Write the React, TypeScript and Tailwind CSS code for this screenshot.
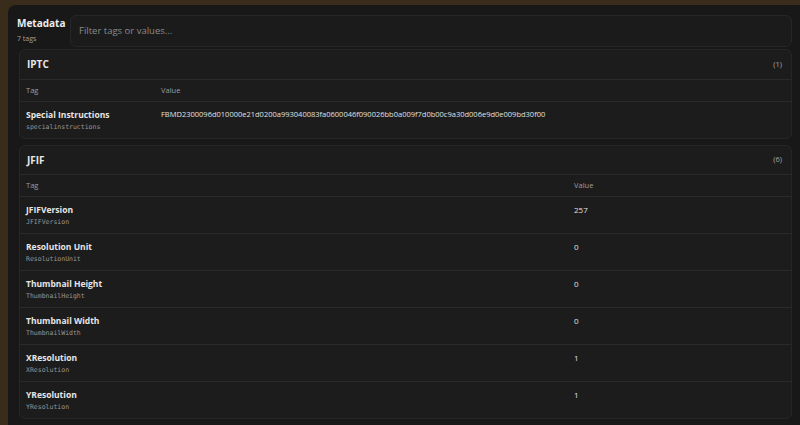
import React from "react";

const jfif = [
  { name: "JFIFVersion", key: "JFIFVersion", value: "257" },
  { name: "Resolution Unit", key: "ResolutionUnit", value: "0" },
  { name: "Thumbnail Height", key: "ThumbnailHeight", value: "0" },
  { name: "Thumbnail Width", key: "ThumbnailWidth", value: "0" },
  { name: "XResolution", key: "XResolution", value: "1" },
  { name: "YResolution", key: "YResolution", value: "1" },
];

function Row({ name, k, value, tagW }: { name: string; k: string; value: string; tagW: string }) {
  return (
    <div className="flex h-[37px] border-t border-[#2a2a2a]">
      <div className={`${tagW} shrink-0 pl-[6px] pt-[6px]`}>
        <div className="text-[8.5px] font-bold leading-[13px] text-[#e6e6e6]">{name}</div>
        <div className="mt-[1px] font-['DejaVu_Sans_Mono',monospace] text-[6.5px] leading-[11px] text-[#969696]">{k}</div>
      </div>
      <div className="pt-[6px] text-[8px] leading-[13px] text-[#e0e0e0]">{value}</div>
    </div>
  );
}

function Section({ title, count, tagW, headH, children }: { title: string; count: string; tagW: string; headH: string; children: React.ReactNode }) {
  return (
    <div className="rounded-md border border-[#262626] bg-[#1c1c1c]">
      <div className={`flex ${headH} items-center justify-between pl-[7px] pr-[9px]`}>
        <span className="text-[10px] font-bold text-[#e8e8e8]">{title}</span>
        <span className="text-[7.5px] text-[#a8a8a8]">{count}</span>
      </div>
      <div className="flex h-[22px] items-center border-t border-[#2a2a2a] text-[7.5px] text-[#9c9c9c]">
        <div className={`${tagW} shrink-0 pl-[6px]`}>Tag</div>
        <div>Value</div>
      </div>
      {children}
    </div>
  );
}

export default function App() {
  return (
    <div className="h-[425px] w-[800px] overflow-hidden bg-[#3a2c1a] pl-[8px] pt-[5px] font-['Open_Sans','Noto_Sans',sans-serif]">
      <div className="h-full w-full rounded-tl-lg bg-[#181818] pl-[9px] pr-[8px]">
        <div className="flex items-start gap-[10px] pt-[10px]">
          <div className="w-[43px] shrink-0 pt-[1px]">
            <div className="text-[10px] font-bold leading-[14px] text-[#ececec]">Metadata</div>
            <div className="mt-[4px] text-[7px] leading-[10px] text-[#a0a0a0]">7 tags</div>
          </div>
          <div className="flex h-[32px] flex-1 items-center rounded-md border border-[#262626] bg-[#1b1b1b] pl-[8px] text-[9.5px] text-[#8a8a8a]">
            Filter tags or values...
          </div>
        </div>
        <div className="ml-[2px] mt-[2px] flex flex-col gap-[6px]">
          <Section title="IPTC" count="(1)" tagW="w-[141px]" headH="h-[29px]">
            <div className="flex h-[37px] border-t border-[#2a2a2a]">
              <div className="w-[141px] shrink-0 pl-[6px] pt-[6px]">
                <div className="text-[8.5px] font-bold leading-[13px] text-[#e6e6e6]">Special Instructions</div>
                <div className="mt-[1px] font-['DejaVu_Sans_Mono',monospace] text-[6.5px] leading-[11px] text-[#969696]">specialinstructions</div>
              </div>
              <div className="pt-[6px] text-[7.5px] leading-[13px] text-[#e0e0e0]">
                FBMD2300096d010000e21d0200a993040083fa0600046f090026bb0a009f7d0b00c9a30d006e9d0e009bd30f00
              </div>
            </div>
          </Section>
          <Section title="JFIF" count="(6)" tagW="w-[554px]" headH="h-[28px]">
            {jfif.map((r) => (
              <Row key={r.key} name={r.name} k={r.key} value={r.value} tagW="w-[554px]" />
            ))}
          </Section>
        </div>
      </div>
    </div>
  );
}
